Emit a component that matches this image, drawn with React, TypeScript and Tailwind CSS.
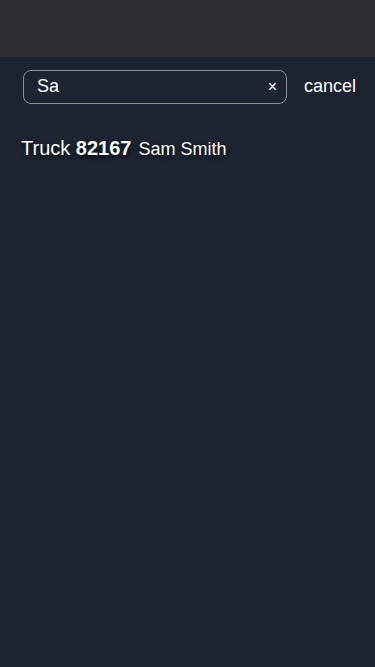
import { useState } from "react";

export default function App() {
  const [query, setQuery] = useState("Sa");

  return (
    <div className="min-h-[667px] bg-[#1c2431] font-['Liberation_Sans',Arial,sans-serif] text-white">
      <div className="h-[57px] bg-[#2b2d31]" />

      <div className="flex items-center pl-[23px] pt-[13px]">
        <div className="relative flex h-[34px] w-[264px] items-center rounded-[8px] border border-[#8a8d93] bg-[#1c2431]">
          <input
            className="h-full w-full bg-transparent pb-[2px] pl-[13px] pr-8 text-[18px] text-white outline-none"
            value={query}
            onChange={(e) => setQuery(e.target.value)}
          />
          <button
            className="absolute right-[9px] top-[8px] text-[16px] leading-none text-white"
            onClick={() => setQuery("")}
          >
            ×
          </button>
        </div>
        <button className="ml-[17px] pb-[2px] text-[18px] text-white">cancel</button>
      </div>

      <div className="flex items-baseline gap-[7px] px-[21px] pt-[29px] [text-shadow:0_2px_4px_rgba(0,0,0,0.8)]">
        <span className="text-[20px]">
          Truck <span className="font-bold">82167</span>
        </span>
        <span className="text-[18px]">Sam Smith</span>
      </div>
    </div>
  );
}
